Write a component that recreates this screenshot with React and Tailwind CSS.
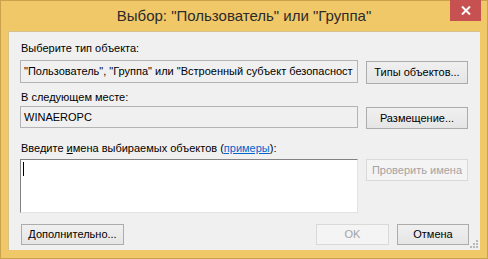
import React from 'react';

const font = { fontFamily: '"Liberation Sans", Arial, sans-serif' };

function Btn({ children, disabled, className = '' }) {
  return (
    <button
      type="button"
      disabled={disabled}
      className={
        'flex items-center justify-center text-[11px] leading-none whitespace-nowrap border ' +
        (disabled
          ? 'border-[#d9d9d9] bg-[#f4f4f4] text-[#a3a3a3] '
          : 'border-[#acacac] bg-gradient-to-b from-[#f0f0f0] to-[#e5e5e5] text-black ') +
        className
      }
    >
      {children}
    </button>
  );
}

function SizeGrip() {
  const dots = [
    [6, 0], [6, 3], [3, 3], [6, 6], [3, 6], [0, 6],
  ];
  return (
    <svg className="absolute right-[2px] bottom-[2px]" width="8" height="8" viewBox="0 0 8 8">
      {dots.map(([x, y]) => (
        <rect key={x + '-' + y} x={x} y={y} width="2" height="2" fill="#b9b9b9" />
      ))}
    </svg>
  );
}

export default function App() {
  return (
    <div
      style={font}
      className="w-[488px] h-[259px] bg-[#f0c868] border border-[#c9a24e] flex flex-col"
    >
      {/* title bar */}
      <div className="relative h-[30px] flex items-center justify-center">
        <span className="text-[15px] text-[#2b2b2b]">
          Выбор: "Пользователь" или "Группа"
        </span>
        <div className="absolute right-[6px] top-[-1px] w-[31px] h-[21px] bg-[#c75050] flex items-center justify-center">
          <svg width="10" height="9" viewBox="0 0 10 9">
            <path d="M1 0.5 L9 8.5 M9 0.5 L1 8.5" stroke="#fff" strokeWidth="2" />
          </svg>
        </div>
      </div>

      {/* client area */}
      <div className="relative ml-[7px] w-[472px] h-[219px] bg-[#f0f0f0] border-t border-l border-[#d8c28c] flex flex-col px-[11px] pt-[9px] text-[11px] text-black">
        <div className="h-[15px] leading-[15px] pl-px">Выберите тип объекта:</div>
        <div className="mt-[4px] flex gap-[8px]">
          <div className="w-[338px] h-[23px] border border-[#b4b4b4] bg-[#f0f0f0] flex items-center pl-[3px] overflow-hidden whitespace-nowrap">
            "Пользователь", "Группа" или "Встроенный субъект безопасност
          </div>
          <Btn className="w-[102px] h-[23px] mt-px">Типы объектов...</Btn>
        </div>

        <div className="mt-[6px] h-[15px] leading-[15px] pl-px">В следующем месте:</div>
        <div className="mt-[1px] flex gap-[8px]">
          <div className="w-[338px] h-[22px] border border-[#b4b4b4] bg-[#f0f0f0] flex items-center pl-[3px]">
            WINAEROPC
          </div>
          <Btn className="w-[102px] h-[22px] mt-px">Размещение...</Btn>
        </div>

        <div className="mt-[12px] h-[15px] leading-[15px] pl-px">
          Введите <span className="underline">и</span>мена выбираемых объектов (
          <span className="text-[#0066cc] underline">примеры</span>):
        </div>
        <div className="mt-[3px] flex gap-[8px]">
          <div className="w-[338px] h-[54px] bg-white border-t border-l border-[#828282] border-b border-r border-b-[#e3e3e3] border-r-[#e3e3e3] pl-[2px] pt-[2px]">
            <div className="w-px h-[14px] bg-black" />
          </div>
          <Btn disabled className="w-[102px] h-[22px]">Проверить имена</Btn>
        </div>

        <div className="mt-[11px] flex">
          <Btn className="ml-px w-[103px] h-[21px]">Дополнительно...</Btn>
          <Btn disabled className="ml-auto w-[73px] h-[21px]">OK</Btn>
          <Btn className="ml-[8px] w-[72px] h-[21px]">Отмена</Btn>
        </div>
        <SizeGrip />
      </div>
    </div>
  );
}
